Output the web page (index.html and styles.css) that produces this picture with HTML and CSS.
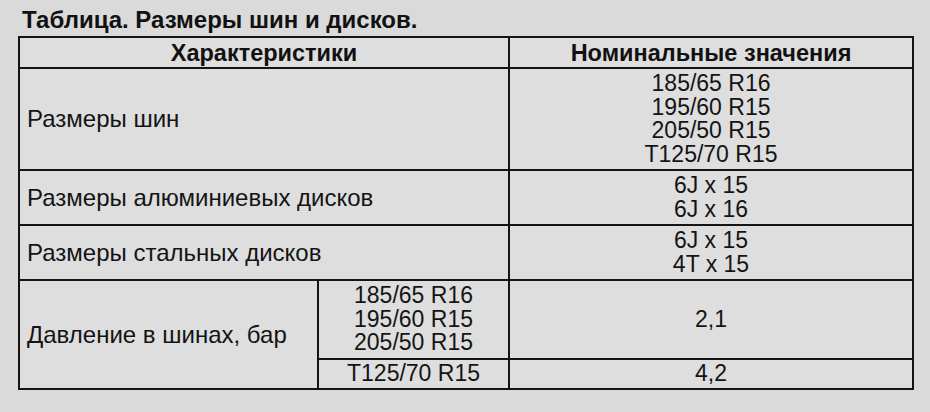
FILE: index.html
```html
<!DOCTYPE html>
<html lang="ru">
<head>
<meta charset="utf-8">
<title>Таблица. Размеры шин и дисков.</title>
<link rel="stylesheet" href="styles.css">
</head>
<body>
<div class="page">
  <h1 class="title">Таблица. Размеры шин и дисков.</h1>
  <table class="spec">
    <colgroup>
      <col class="c1">
      <col class="c2">
      <col class="c3">
    </colgroup>
    <thead>
      <tr class="r-head">
        <th colspan="2">Характеристики</th>
        <th>Номинальные значения</th>
      </tr>
    </thead>
    <tbody>
      <tr class="r1">
        <td colspan="2" class="name">Размеры шин</td>
        <td class="val">185/65 R16<br>195/60 R15<br>205/50 R15<br>T125/70 R15</td>
      </tr>
      <tr class="r2">
        <td colspan="2" class="name">Размеры алюминиевых дисков</td>
        <td class="val">6J x 15<br>6J x 16</td>
      </tr>
      <tr class="r3">
        <td colspan="2" class="name">Размеры стальных дисков</td>
        <td class="val">6J x 15<br>4T x 15</td>
      </tr>
      <tr class="r4a">
        <td rowspan="2" class="name">Давление в шинах, бар</td>
        <td class="val">185/65 R16<br>195/60 R15<br>205/50 R15</td>
        <td class="val">2,1</td>
      </tr>
      <tr class="r4b">
        <td class="val">T125/70 R15</td>
        <td class="val">4,2</td>
      </tr>
    </tbody>
  </table>
</div>
</body>
</html>
```
FILE: styles.css
```css
html, body {
  margin: 0;
  padding: 0;
  background: #dadada;
}
body {
  width: 930px;
  height: 412px;
  overflow: hidden;
  font-family: "Liberation Sans", Arial, sans-serif;
  color: #141414;
}
.page {
  padding: 6px 0 0 18px;
}
.title {
  margin: 0 0 0 4px;
  font-size: 24px;
  font-weight: bold;
  line-height: 28px;
  height: 30px;
  color: #111111;
}
.spec {
  border-collapse: collapse;
  table-layout: fixed;
  width: 894px;
  background: #dedede;
}
.c1 { width: 299px; }
.c2 { width: 191px; }
.c3 { width: 404px; }
.spec th, .spec td {
  border: 2px solid #141414;
  padding: 0;
  vertical-align: middle;
}
.spec th {
  font-size: 23.5px;
  font-weight: bold;
  text-align: center;
  line-height: 26px;
  color: #111111;
}
.spec td {
  font-size: 23px;
  line-height: 23.5px;
}
.spec td.name {
  text-align: left;
  padding-left: 7px;
  font-size: 24px;
}
.val {
  text-align: center;
}
.r-head { height: 31px; }
.r1 { height: 102px; }
.r2 { height: 55px; }
.r3 { height: 55px; }
.r4a { height: 79px; }
.r4b { height: 30px; }
```
